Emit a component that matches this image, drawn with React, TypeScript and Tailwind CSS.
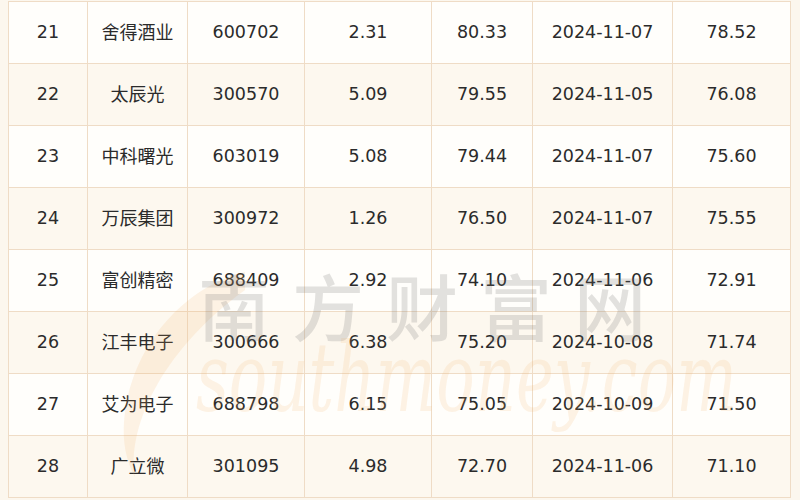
const rows = [
  ["21", "舍得酒业", "600702", "2.31", "80.33", "2024-11-07", "78.52"],
  ["22", "太辰光", "300570", "5.09", "79.55", "2024-11-05", "76.08"],
  ["23", "中科曙光", "603019", "5.08", "79.44", "2024-11-07", "75.60"],
  ["24", "万辰集团", "300972", "1.26", "76.50", "2024-11-07", "75.55"],
  ["25", "富创精密", "688409", "2.92", "74.10", "2024-11-06", "72.91"],
  ["26", "江丰电子", "300666", "6.38", "75.20", "2024-10-08", "71.74"],
  ["27", "艾为电子", "688798", "6.15", "75.05", "2024-10-09", "71.50"],
  ["28", "广立微", "301095", "4.98", "72.70", "2024-11-06", "71.10"],
];

const App = () => {
  return (
    <div className="relative w-[800px] h-[500px] overflow-hidden bg-[#fcf7ee] pt-px pl-2 font-['DejaVu_Sans','Noto_Sans_CJK_SC',sans-serif] text-[17.5px] text-[#2b2b2b]">
      <div className="w-[783px] border-l border-[#efdcc6]">
        {rows.map((r, i) => (
          <div
            key={r[0]}
            className={`grid grid-cols-[79px_100px_117px_127px_101px_140px_118px] h-[62px] border-t border-[#efdcc6] ${
              i % 2 === 0 ? "bg-[#fffefb]" : "bg-[#fdf8ef]"
            }`}
          >
            {r.map((c, j) => (
              <div
                key={j}
                className={`flex items-center justify-center border-r border-[#efdcc6] ${j === 1 ? "text-[18px]" : ""}`}
              >
                {c}
              </div>
            ))}
          </div>
        ))}
        <div className="border-t border-[#efdcc6]" />
      </div>

      {/* watermark */}
      <div className="pointer-events-none absolute left-0 top-0 w-[800px] h-[500px]">
        <svg className="absolute left-[95px] top-[262px]" width="160" height="220" viewBox="0 0 160 220">
          <path
            d="M150 10 C90 25 40 80 30 150 C26 180 32 200 40 215 C32 170 62 92 150 28 Z"
            fill="rgba(240,170,90,0.14)"
          />
        </svg>
        <div className="absolute left-[198px] top-[268px] text-[72px] leading-none tracking-[22px] text-[rgba(110,110,110,0.2)] font-['Noto_Sans_CJK_SC',sans-serif] font-medium">
          南方财富网
        </div>
        <div className="absolute left-[196px] top-[330px] origin-top-left scale-y-150 text-[64px] leading-none italic text-[rgba(240,175,100,0.15)] font-['DejaVu_Serif',serif]">
          southmoney.com
        </div>
      </div>
    </div>
  );
};

export default App;
